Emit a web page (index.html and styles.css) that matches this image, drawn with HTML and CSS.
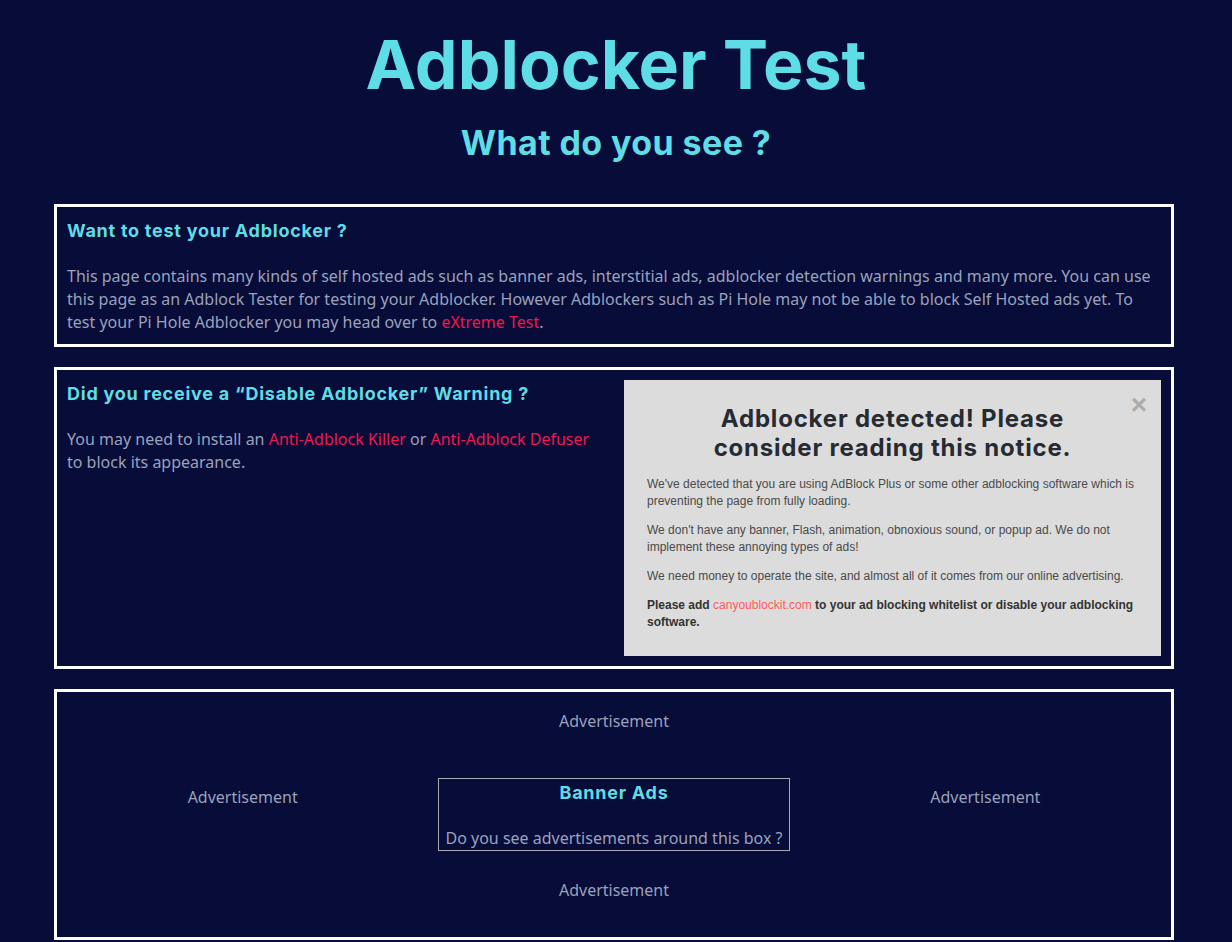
FILE: index.html
```html
<!DOCTYPE html>
<html lang="en">
<head>
<meta charset="utf-8">
<title>Adblocker Test</title>
<link rel="stylesheet" href="styles.css">
</head>
<body>
<header class="hero">
  <h1 class="title">Adblocker Test</h1>
  <h2 class="subtitle">What do you see ?</h2>
</header>
<main class="container">
  <section class="card">
    <h3 class="card-title">Want to test your Adblocker ?</h3>
    <p class="text">This page contains many kinds of self hosted ads such as banner ads, interstitial ads, adblocker detection warnings and many more. You can use this page as an Adblock Tester for testing your Adblocker. However Adblockers such as Pi Hole may not be able to block Self Hosted ads yet. To test your Pi Hole Adblocker you may head over to <a class="link" href="#">eXtreme Test</a>.</p>
  </section>
  <section class="card card-split">
    <div class="split-text">
      <h3 class="card-title split-title">Did you receive a “Disable Adblocker” Warning ?</h3>
      <p class="text">You may need to install an <a class="link" href="#">Anti-Adblock Killer</a> or <a class="link" href="#">Anti-Adblock Defuser</a> to block its appearance.</p>
    </div>
    <div class="notice">
      <span class="notice-close">×</span>
      <h4 class="notice-title">Adblocker detected! Please consider reading this notice.</h4>
      <p class="notice-text">We've detected that you are using AdBlock Plus or some other adblocking software which is preventing the page from fully loading.</p>
      <p class="notice-text">We don't have any banner, Flash, animation, obnoxious sound, or popup ad. We do not implement these annoying types of ads!</p>
      <p class="notice-text">We need money to operate the site, and almost all of it comes from our online advertising.</p>
      <p class="notice-text notice-strong">Please add <span class="notice-link">canyoublockit.com</span> to your ad blocking whitelist or disable your adblocking software.</p>
    </div>
  </section>
  <section class="card banner-card">
    <div class="ad ad-top">Advertisement</div>
    <div class="banner-row">
      <div class="ad ad-side">Advertisement</div>
      <div class="banner-box">
        <h3 class="banner-title">Banner Ads</h3>
        <p class="banner-text">Do you see advertisements around this box ?</p>
      </div>
      <div class="ad ad-side">Advertisement</div>
    </div>
    <div class="ad ad-bottom">Advertisement</div>
  </section>
</main>
</body>
</html>
```
FILE: styles.css
```css
* { box-sizing: border-box; }
html, body { margin: 0; padding: 0; }
body {
  background: #070c38;
  font-family: "Noto Sans", "Open Sans", sans-serif;
  color: #9aa2bc;
  overflow: hidden;
}
.hero { text-align: center; }
.title {
  margin: 22px 0 0;
  font-family: Inter, "Noto Sans", sans-serif;
  font-weight: 700;
  font-size: 68px;
  line-height: 84px;
  color: #5fdde6;
}
.subtitle {
  margin: 17px 0 0;
  font-family: Inter, "Noto Sans", sans-serif;
  font-weight: 700;
  font-size: 34px;
  letter-spacing: 0.4px;
  line-height: 40px;
  color: #5fdde6;
}
.container {
  width: 1120px;
  margin: 41px 0 0 54px;
  display: flex;
  flex-direction: column;
  gap: 20px;
}
.card {
  border: 3px solid #ffffff;
  padding: 11px 10px 10px;
}
.card-title {
  margin: 0;
  font-family: Inter, "Noto Sans", sans-serif;
  font-weight: 700;
  font-size: 18px;
  letter-spacing: 0.75px;
  line-height: 26px;
  color: #5fdde6;
}
.text {
  margin: 21px 0 0;
  font-size: 16px;
  line-height: 23px;
}
.link { color: #f0174f; text-decoration: none; }
.card-split {
  display: grid;
  grid-template-columns: 1fr 537px;
  gap: 20px;
  padding: 10px 10px 10px;
}
.split-title { margin-top: 1px; }
.notice {
  position: relative;
  background: #dcdcdc;
  height: 276px;
  padding: 24px 23px 0;
  font-family: "Liberation Sans", Arial, sans-serif;
}
.notice-close {
  position: absolute;
  top: 10px;
  right: 14px;
  font-size: 28px;
  font-weight: 700;
  color: #acacac;
  line-height: 30px;
}
.notice-title {
  margin: 0 0 14px;
  padding: 0 50px;
  text-align: center;
  font-family: Inter, "Noto Sans", sans-serif;
  font-weight: 700;
  font-size: 24px;
  letter-spacing: 0.8px;
  line-height: 29px;
  color: #262b33;
}
.notice-text {
  margin: 0 0 12px;
  font-size: 12px;
  line-height: 17px;
  color: #4a4a4a;
}
.notice-strong { font-weight: 700; color: #333; }
.notice-link { color: #ff5a5f; font-weight: 400; }
.banner-card { padding: 18px 0 35px; }
.ad { text-align: center; font-size: 16px; line-height: 23px; }
.banner-row {
  display: grid;
  grid-template-columns: 1fr 1fr 1fr;
  align-items: start;
  margin: 45px 0 28px;
}
.ad-side { margin-top: 8px; }
.banner-box {
  margin: 0 10px;
  border: 1px solid #a9a9b4;
  text-align: center;
  padding: 2px 0 0;
}
.banner-title {
  margin: 0;
  font-family: Inter, "Noto Sans", sans-serif;
  font-weight: 700;
  font-size: 18px;
  letter-spacing: 0.75px;
  line-height: 24px;
  color: #5fdde6;
}
.banner-text { margin: 22px 0 0; font-size: 16px; line-height: 23px; }
```
